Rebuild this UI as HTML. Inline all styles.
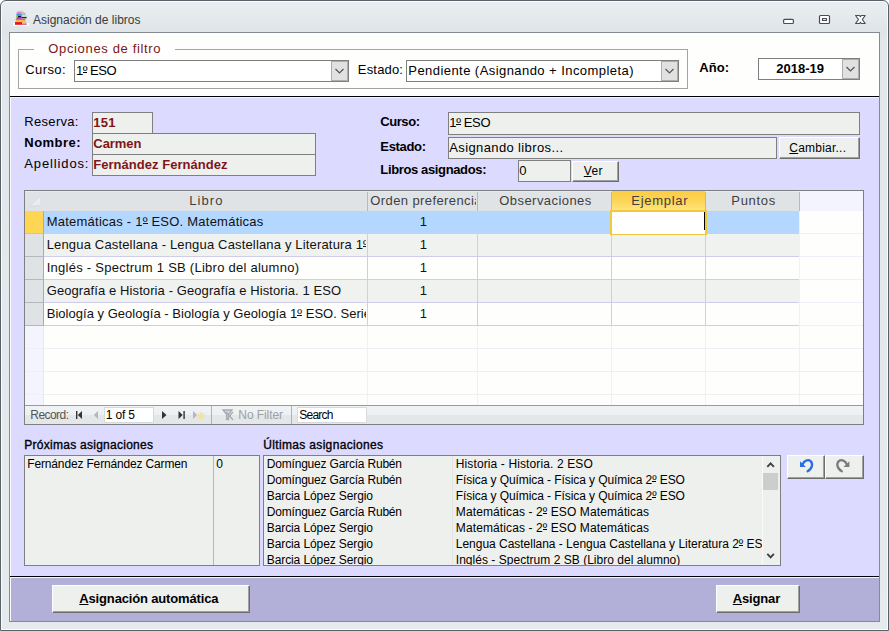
<!DOCTYPE html>
<html lang="es">
<head>
<meta charset="utf-8">
<title>Asignación de libros</title>
<style>
html,body{margin:0;padding:0;width:889px;height:631px;overflow:hidden;background:#fff;}
body{position:relative;font-family:"Liberation Sans",sans-serif;}
.a{position:absolute;box-sizing:border-box;}
.t{position:absolute;white-space:pre;font-family:"Liberation Sans",sans-serif;}
.sb{-webkit-text-stroke:0.350px #000;}
.o{position:relative;font-style:normal;}
.o::after{content:"";position:absolute;left:0;right:0;bottom:5px;height:1px;background:currentColor;}
.t u{text-decoration:underline;text-underline-offset:1px;}
#win{left:0;top:0;width:889px;height:631px;border:1px solid #5b6168;border-radius:6px 6px 0 0;
 background:linear-gradient(#eaeef1 0px,#e6ebee 12px,#dfe4e8 31px,#e2e7eb 40px,#e5eaed 631px);box-shadow:inset 0 0 0 1px #fbfcfd;}
#client{left:9px;top:32px;width:871px;height:590px;border:1px solid #848b92;background:#fefefd;}
#detail{left:10px;top:97px;width:869px;height:479px;background:#dcdaff;}
#footer{left:10px;top:577px;width:869px;height:44px;background:#b2b0d9;}
.hl{left:10px;width:869px;height:1px;background:#000;}
.tb{background:#eef0ee;border:1px solid #7f7f7f;}
.cb{background:#fff;border:1px solid #7f7f7f;}
.dd{background:#e1e1e1;border:1px solid #adadad;}
.btn{background:#eef0ee;border:1px solid;border-color:#fff #6d6d6d #6d6d6d #fff;box-shadow:inset -1px -1px 0 #a0a0a0;}
.col{top:211px;width:1px;height:115px;background:#cfcde9;}
.hs{top:192px;width:1px;height:19px;background:#b6babf;}
</style>
</head>
<body>
<div id="win" class="a"></div>
<!-- title icon -->
<svg class="a" style="left:13px;top:10px" width="17" height="17" viewBox="0 0 17 17">
 <rect x="0" y="12.900" width="16" height="3.100" fill="#fcfcfc"/>
 <rect x="2" y="12" width="7.200" height="2.800" fill="#e01820"/>
 <rect x="9.200" y="12.300" width="4.500" height="2.300" fill="#eca8a8"/>
 <rect x="9.200" y="13.900" width="4.500" height=".7" fill="#c84048"/>
 <rect x="2.700" y="10.300" width="9.900" height="1.800" fill="#f2c81e"/>
 <rect x="2.900" y="9.400" width="9.600" height="1" fill="#e8901c"/>
 <rect x="2.800" y="8.700" width="9.500" height=".8" fill="#6a6a20"/>
 <rect x="3.600" y="7.300" width="4.800" height="1.500" fill="#c818c8"/>
 <rect x="8.400" y="6.900" width="5.300" height="1.300" fill="#2a2a3c"/>
 <rect x="8.400" y="8.100" width="4" height=".7" fill="#9a9aa8"/>
 <rect x="4.500" y="5.600" width="4" height="1.800" fill="#141450"/>
 <rect x="3" y="5.600" width="2" height="1.500" fill="#88d048"/>
 <rect x="3.500" y="3.400" width="4.900" height="2.200" fill="#3c8ce8"/>
 <rect x="8" y="3.600" width="2" height="1.800" fill="#68b838"/>
 <rect x="9.500" y="2.800" width="3.500" height="2.800" fill="#d4d8de"/>
 <rect x="10.500" y="3.400" width="1.200" height=".9" fill="#5a6270"/>
 <rect x="8.600" y="5.500" width="4.800" height="1.400" fill="#c8ccd4"/>
 <rect x="3.800" y="1.600" width="4.600" height="1.900" fill="#e080c8"/>
 <rect x="5.200" y=".6" width="4.400" height="1.300" fill="#e4c8e0"/>
 <rect x="8.200" y="1.600" width="2.500" height="1.300" fill="#b8c0c8"/>
</svg>
<!-- caption buttons -->
<svg class="a" style="left:780px;top:12px" width="90" height="15" viewBox="0 0 90 15">
 <g fill="#fff" stroke="#494d57" stroke-width="1.2" stroke-linejoin="round">
  <rect x="3.6" y="7.400" width="9.800" height="4.100" rx="1"/>
  <path d="M40.500 3.500h8a1 1 0 0 1 1 1v6a1 1 0 0 1-1 1h-8a1 1 0 0 1-1-1v-6a1 1 0 0 1 1-1zM42.500 6.500v2h4v-2z" fill-rule="evenodd"/>
  <path d="M75.600 3.500H79.500L80.400 4.700 81.300 3.500H85.200L82.300 7.500 85.200 11.500H81.300L80.400 10.300 79.500 11.500H75.600L78.500 7.500z"/>
 </g>
</svg>

<div id="client" class="a"></div>
<div id="detail" class="a"></div>
<div id="footer" class="a"></div>
<div class="a" style="left:10px;top:97px;width:869px;height:1px;background:#f4f3ff;"></div>
<div class="a" style="left:10px;top:577px;width:869px;height:1px;background:#f6f6fc;"></div>
<div class="a" style="left:10px;top:97px;width:1px;height:524px;background:#fafaff;"></div>
<div class="a hl" style="top:96px"></div>
<div class="a hl" style="top:576px"></div>

<!-- filter fieldset -->
<div class="a" style="left:18px;top:49px;width:670px;height:40px;border:1px solid #a3a3a3;box-shadow:inset 1px 1px 0 #fff, 1px 1px 0 #fff;"></div>
<div class="a" style="left:34px;top:46px;width:141px;height:8px;background:#fff;"></div>
<!-- combos -->
<div class="a cb" style="left:74px;top:60px;width:275px;height:22px;"></div>
<div class="a dd" style="left:331px;top:61px;width:17px;height:20px;"></div>
<div class="a cb" style="left:406px;top:60px;width:273px;height:22px;"></div>
<div class="a dd" style="left:661px;top:61px;width:17px;height:20px;"></div>
<div class="a cb" style="left:758px;top:58px;width:102px;height:22px;"></div>
<div class="a dd" style="left:842px;top:59px;width:17px;height:20px;"></div>
<svg class="a" style="left:0;top:0" width="889" height="100" viewBox="0 0 889 100" fill="none" stroke="#555" stroke-width="1.2">
 <path d="M335.5 69l4 4 4-4"/><path d="M665.500 69l4 4 4-4"/><path d="M846.5 67l4 4 4-4"/>
</svg>

<!-- detail text boxes -->
<div class="a tb" style="left:92px;top:112px;width:61px;height:22px;"></div>
<div class="a tb" style="left:92px;top:133px;width:224px;height:22px;"></div>
<div class="a tb" style="left:92px;top:154px;width:224px;height:22px;"></div>
<div class="a tb" style="left:448px;top:112px;width:412px;height:23px;"></div>
<div class="a tb" style="left:448px;top:137px;width:329px;height:22px;"></div>
<div class="a btn" style="left:779px;top:137px;width:81px;height:22px;"></div>
<div class="a tb" style="left:518px;top:160px;width:53px;height:22px;"></div>
<div class="a btn" style="left:572px;top:161px;width:47px;height:21px;"></div>

<!-- datasheet -->
<div class="a" style="left:24px;top:190px;width:840px;height:235px;border:1px solid #7f7f7f;background:#fefefd;"></div>
<div class="a" style="left:25px;top:191px;width:838px;height:20px;background:#f4f4ff;"></div>
<div class="a" style="left:25px;top:191px;width:774px;height:20px;background:#dfe3e6;border-top:1px solid #e8ebee;"></div>
<div class="a" style="left:612px;top:191px;width:93px;height:20px;background:linear-gradient(#fbcd42,#fdd556 50%,#ffe47e);"></div>
<svg class="a" style="left:28px;top:195px" width="14" height="13" viewBox="0 0 14 13"><path d="M1.500 11.500L12 1V11.500z" fill="#e9edf0"/><path d="M1.500 11.500L12 1" stroke="#b9d6f7" stroke-width=".9" stroke-dasharray="1 .5"/><path d="M2.500 11h9.500" stroke="#d2d3e4" stroke-width="1"/></svg>
<div class="a hs" style="left:367px"></div><div class="a hs" style="left:477px"></div><div class="a hs" style="left:611px"></div><div class="a hs" style="left:705px"></div><div class="a hs" style="left:799px"></div>
<!-- rows -->
<div class="a" style="left:44px;top:211px;width:755px;height:22px;background:#b3d7ff;"></div>
<div class="a" style="left:44px;top:234px;width:755px;height:22px;background:#f0f2f0;"></div>
<div class="a" style="left:44px;top:280px;width:755px;height:22px;background:#f0f2f0;"></div>
<div class="a" style="left:44px;top:233px;width:756px;height:1px;background:#cfcde9;"></div>
<div class="a" style="left:44px;top:256px;width:756px;height:1px;background:#cfcde9;"></div>
<div class="a" style="left:44px;top:279px;width:756px;height:1px;background:#cfcde9;"></div>
<div class="a" style="left:44px;top:302px;width:756px;height:1px;background:#cfcde9;"></div>
<div class="a" style="left:44px;top:325px;width:756px;height:1px;background:#cfcde9;"></div>
<div class="a col" style="left:367px"></div><div class="a col" style="left:477px"></div><div class="a col" style="left:611px"></div><div class="a col" style="left:705px"></div><div class="a col" style="left:799px"></div>
<!-- faint empty grid -->
<div class="a" style="left:25px;top:326px;width:18px;height:79px;background:#f4f4ff;"></div>
<div class="a" style="left:25px;top:348px;width:838px;height:1px;background:#eef0f6;"></div>
<div class="a" style="left:25px;top:371px;width:838px;height:1px;background:#eef0f6;"></div>
<div class="a" style="left:25px;top:394px;width:838px;height:1px;background:#eef0f6;"></div>
<div class="a" style="left:43px;top:326px;width:1px;height:79px;background:#e6e6f4;"></div>
<div class="a" style="left:367px;top:326px;width:1px;height:79px;background:#f0f1f8;"></div>
<div class="a" style="left:477px;top:326px;width:1px;height:79px;background:#f0f1f8;"></div>
<div class="a" style="left:611px;top:326px;width:1px;height:79px;background:#f0f1f8;"></div>
<div class="a" style="left:705px;top:326px;width:1px;height:79px;background:#f0f1f8;"></div>
<div class="a" style="left:799px;top:211px;width:1px;height:194px;background:#f0f1f8;"></div>
<div class="a" style="left:800px;top:233px;width:63px;height:1px;background:#eef1f7;"></div><div class="a" style="left:800px;top:256px;width:63px;height:1px;background:#eef1f7;"></div><div class="a" style="left:800px;top:279px;width:63px;height:1px;background:#eef1f7;"></div><div class="a" style="left:800px;top:302px;width:63px;height:1px;background:#eef1f7;"></div><div class="a" style="left:800px;top:325px;width:63px;height:1px;background:#eef1f7;"></div>
<!-- row selectors -->
<div class="a" style="left:25px;top:211px;width:19px;height:23px;background:#ffd653;border-bottom:1px solid #c9c4b0;border-right:1px solid #a8acb0;"></div>
<div class="a" style="left:25px;top:234px;width:19px;height:23px;background:#dfe3e6;border-bottom:1px solid #b4b8bc;border-right:1px solid #a8acb0;"></div>
<div class="a" style="left:25px;top:257px;width:19px;height:23px;background:#dfe3e6;border-bottom:1px solid #b4b8bc;border-right:1px solid #a8acb0;"></div>
<div class="a" style="left:25px;top:280px;width:19px;height:23px;background:#dfe3e6;border-bottom:1px solid #b4b8bc;border-right:1px solid #a8acb0;"></div>
<div class="a" style="left:25px;top:303px;width:19px;height:23px;background:#dfe3e6;border-bottom:1px solid #b4b8bc;border-right:1px solid #a8acb0;"></div>
<!-- active cell -->
<div class="a" style="left:610px;top:210px;width:97px;height:25px;background:#fff;border:2px solid #f0c83c;border-bottom-width:1.500px;"></div>
<div class="a" style="left:704px;top:212px;width:1px;height:18px;background:#000;"></div>
<!-- nav bar -->
<div class="a" style="left:25px;top:405px;width:838px;height:19px;background:linear-gradient(#f0f3f6,#eef1f4 50%,#e3e7ea 52%,#e3e7ea);border-top:1px solid #9a9a9a;"></div>
<div class="a" style="left:104px;top:407px;width:50px;height:16px;background:#fff;border:1px solid #d5dade;"></div>
<div class="a" style="left:297px;top:407px;width:70px;height:16px;background:#fff;border:1px solid #d5dade;"></div>
<div class="a" style="left:211px;top:406px;width:1px;height:18px;background:#b0b4b8;"></div>
<div class="a" style="left:291px;top:406px;width:1px;height:18px;background:#b0b4b8;"></div>
<svg class="a" style="left:70px;top:406px" width="230" height="18" viewBox="0 0 230 18">
 <g fill="#333"><rect x="6" y="5" width="1.4" height="8"/><path d="M12 5v8l-4.2-4z"/>
 <path d="M92 5v8l4.5-4z"/><path d="M108.5 5v8l4.2-4z"/><rect x="113.4" y="5" width="1.4" height="8"/></g>
 <g fill="#b4b8bc"><path d="M28 5v8l-4.2-4z"/><path d="M123 5v8l4.2-4z"/></g>
 <path d="M131 5l1 2.4 2.4-1-1 2.4 2.4 1-2.4 1 1 2.4-2.4-1-1 2.4-1-2.4-2.4 1 1-2.4-2.400-1 2.4-1-1-2.400 2.4 1z" fill="#f3e3a0"/>
 <g stroke="#a8acb0" stroke-width="1.3" fill="none"><path d="M153 4h9l-3.600 4.500v5l-1.800-1.500v-3.500z" fill="#d6d9dc"/><path d="M156 6l7 8M163 6l-7 8"/></g>
</svg>

<!-- list boxes -->
<div class="a tb" style="left:24px;top:455px;width:236px;height:111px;"></div>
<div class="a" style="left:213px;top:456px;width:1px;height:109px;background:#b8b8b8;"></div>
<div class="a tb" style="left:263px;top:455px;width:518px;height:111px;"></div>
<div class="a" style="left:452px;top:456px;width:1px;height:109px;background:#e2e4e2;"></div>
<div class="a" style="left:762px;top:456px;width:18px;height:109px;background:#eef0ee;border-left:1px solid #fafafa;"></div>
<div class="a" style="left:763px;top:473px;width:15px;height:17px;background:#cdcdcd;"></div>
<svg class="a" style="left:762px;top:456px" width="18" height="108" viewBox="0 0 18 108" fill="none" stroke="#404040" stroke-width="1.9"><path d="M5.300 10.900l3.300-3.500 3.300 3.500"/><path d="M5.300 97.800l3.300 3.500 3.300-3.500"/></svg>
<!-- undo / redo -->
<div class="a btn" style="left:787px;top:455px;width:38px;height:24px;"></div>
<div class="a btn" style="left:825px;top:455px;width:39px;height:24px;"></div>
<svg class="a" style="left:797px;top:458px" width="60" height="16" viewBox="0 0 60 16">
 <path d="M5.800 6C7 2.800 11 1 13.600 3.200C16.200 5.600 15.400 10.600 10.600 13.200" fill="none" stroke="#2d6ce2" stroke-width="2.300" stroke-linecap="round"/>
 <path d="M3 3.200V8.900H8.900z" fill="#2d6ce2"/>
 <path d="M49.600 6C48.400 2.800 44.400 1 41.800 3.200C39.200 5.600 40 10.600 44.800 13.200" fill="none" stroke="#7c7c7c" stroke-width="2.300" stroke-linecap="round"/>
 <path d="M52.400 3.200V8.900H46.500z" fill="#7c7c7c"/>
</svg>

<!-- bottom buttons -->
<div class="a btn" style="left:52px;top:585px;width:198px;height:28px;"></div>
<div class="a btn" style="left:716px;top:585px;width:84px;height:28px;"></div>

<span class="t" style="left:33px;top:12.5px;font-size:12px;line-height:15px;letter-spacing:0.005px;color:#3a3a3a;">Asignación de libros</span>
<span class="t" style="left:48.3px;top:40.5px;font-size:13px;line-height:16px;letter-spacing:0.649px;color:#7c1515;">Opciones de filtro</span>
<span class="t" style="left:25.3px;top:61.5px;font-size:13px;line-height:16px;letter-spacing:0.381px;color:#000;">Curso:</span>
<span class="t" style="left:75.9px;top:62.5px;font-size:13px;line-height:16px;letter-spacing:-0.489px;color:#000;">1<i class="o">º</i> ESO</span>
<span class="t" style="left:357.8px;top:61.5px;font-size:13px;line-height:16px;letter-spacing:0.184px;color:#000;">Estado:</span>
<span class="t" style="left:408.3px;top:62.5px;font-size:13px;line-height:16px;letter-spacing:0.440px;color:#000;">Pendiente (Asignando + Incompleta)</span>
<span class="t" style="left:699.3px;top:59.5px;font-size:13px;line-height:16px;letter-spacing:0.030px;color:#000;font-weight:700;">Año:</span>
<span class="t" style="left:776.3px;top:60.5px;font-size:13px;line-height:16px;letter-spacing:-0.003px;color:#000;font-weight:700;">2018-19</span>
<span class="t" style="left:24.3px;top:113.5px;font-size:13px;line-height:16px;letter-spacing:0.310px;color:#000;">Reserva:</span>
<span class="t" style="left:24.3px;top:134.5px;font-size:13px;line-height:16px;letter-spacing:0.458px;color:#000;font-weight:700;">Nombre:</span>
<span class="t" style="left:24.3px;top:155.5px;font-size:13px;line-height:16px;letter-spacing:0.869px;color:#000;">Apellidos:</span>
<span class="t" style="left:93.3px;top:114.5px;font-size:13px;line-height:16px;letter-spacing:0.248px;color:#7e1618;font-weight:700;">151</span>
<span class="t" style="left:93.3px;top:135.5px;font-size:13px;line-height:16px;letter-spacing:-0.044px;color:#7e1618;font-weight:700;">Carmen</span>
<span class="t" style="left:93.3px;top:156.5px;font-size:13px;line-height:16px;letter-spacing:0.031px;color:#7e1618;font-weight:700;">Fernández Fernández</span>
<span class="t" style="left:380.3px;top:113.5px;font-size:13px;line-height:16px;letter-spacing:-0.438px;color:#000;font-weight:700;">Curso:</span>
<span class="t" style="left:380.3px;top:138.5px;font-size:13px;line-height:16px;letter-spacing:-0.329px;color:#000;font-weight:700;">Estado:</span>
<span class="t" style="left:380.3px;top:161.5px;font-size:13px;line-height:16px;letter-spacing:-0.361px;color:#000;font-weight:700;">Libros asignados:</span>
<span class="t" style="left:449.3px;top:114.5px;font-size:13px;line-height:16px;letter-spacing:-0.369px;color:#000;">1<i class="o">º</i> ESO</span>
<span class="t" style="left:449.3px;top:139.5px;font-size:13px;line-height:16px;letter-spacing:0.375px;color:#000;">Asignando libros...</span>
<span class="t" style="left:519.3px;top:162.5px;font-size:13px;line-height:16px;letter-spacing:0.000px;color:#000;">0</span>
<span class="t" style="left:583.8px;top:163.5px;font-size:12px;line-height:15px;letter-spacing:0.342px;color:#000;"><u>V</u>er</span>
<span class="t" style="left:789.3px;top:140.5px;font-size:12px;line-height:15px;letter-spacing:0.224px;color:#000;"><u>C</u>ambiar...</span>
<span class="t" style="left:189.3px;top:192.5px;font-size:13px;line-height:16px;letter-spacing:1.070px;color:#3f3f3f;">Libro</span>
<span class="t" style="left:370.3px;top:192.5px;font-size:13px;line-height:16px;letter-spacing:0.398px;color:#3f3f3f;width:106px;overflow:hidden;">Orden preferencia</span>
<span class="t" style="left:499.3px;top:192.5px;font-size:13px;line-height:16px;letter-spacing:0.436px;color:#3f3f3f;">Observaciones</span>
<span class="t" style="left:631.3px;top:192.5px;font-size:13px;line-height:16px;letter-spacing:0.700px;color:#3f3f3f;">Ejemplar</span>
<span class="t" style="left:731.3px;top:192.5px;font-size:13px;line-height:16px;letter-spacing:0.693px;color:#3f3f3f;">Puntos</span>
<span class="t" style="left:46.7px;top:213.5px;font-size:13px;line-height:16px;letter-spacing:0.231px;color:#111;">Matemáticas - 1<i class="o">º</i> ESO. Matemáticas</span>
<span class="t" style="left:419.8px;top:213.5px;font-size:13px;line-height:16px;letter-spacing:0.000px;color:#111;">1</span>
<span class="t" style="left:46.7px;top:236.5px;font-size:13px;line-height:16px;letter-spacing:0.164px;color:#111;width:319.6px;overflow:hidden;">Lengua Castellana - Lengua Castellana y Literatura 1<i class="o">º</i> ESO</span>
<span class="t" style="left:419.8px;top:236.5px;font-size:13px;line-height:16px;letter-spacing:0.000px;color:#111;">1</span>
<span class="t" style="left:46.7px;top:259.5px;font-size:13px;line-height:16px;letter-spacing:0.256px;color:#111;">Inglés - Spectrum 1 SB (Libro del alumno)</span>
<span class="t" style="left:419.8px;top:259.5px;font-size:13px;line-height:16px;letter-spacing:0.000px;color:#111;">1</span>
<span class="t" style="left:46.7px;top:282.5px;font-size:13px;line-height:16px;letter-spacing:0.095px;color:#111;">Geografía e Historia - Geografía e Historia. 1 ESO</span>
<span class="t" style="left:419.8px;top:282.5px;font-size:13px;line-height:16px;letter-spacing:0.000px;color:#111;">1</span>
<span class="t" style="left:46.7px;top:305.5px;font-size:13px;line-height:16px;letter-spacing:0.029px;color:#111;width:319.6px;overflow:hidden;">Biología y Geología - Biología y Geología 1<i class="o">º</i> ESO. Serie</span>
<span class="t" style="left:419.8px;top:305.5px;font-size:13px;line-height:16px;letter-spacing:0.000px;color:#111;">1</span>
<span class="t" style="left:30.3px;top:407.5px;font-size:12px;line-height:15px;letter-spacing:-0.555px;color:#555;">Record:</span>
<span class="t" style="left:105.8px;top:407.5px;font-size:12px;line-height:15px;letter-spacing:-0.166px;color:#000;">1 of 5</span>
<span class="t" style="left:238.3px;top:407.5px;font-size:12px;line-height:15px;letter-spacing:-0.080px;color:#a0a0a0;">No Filter</span>
<span class="t" style="left:299.3px;top:407.5px;font-size:12px;line-height:15px;letter-spacing:-0.766px;color:#000;">Search</span>
<span class="t sb" style="left:24.3px;top:438px;font-size:12px;line-height:15px;letter-spacing:0.265px;color:#000;">Próximas asignaciones</span>
<span class="t sb" style="left:263.3px;top:438px;font-size:12px;line-height:15px;letter-spacing:0.332px;color:#000;">Últimas asignaciones</span>
<span class="t" style="left:27.3px;top:457px;font-size:12px;line-height:15px;letter-spacing:-0.156px;color:#000;">Fernández Fernández Carmen</span>
<span class="t" style="left:216.3px;top:457px;font-size:12px;line-height:15px;letter-spacing:0.000px;color:#000;">0</span>
<span class="t" style="left:79.3px;top:590.5px;font-size:13px;line-height:16px;letter-spacing:-0.156px;color:#000;font-weight:700;"><u>A</u>signación automática</span>
<span class="t" style="left:732.8px;top:590.5px;font-size:13px;line-height:16px;letter-spacing:-0.159px;color:#000;font-weight:700;"><u>A</u>signar</span>
<div class="a" style="left:0;top:0;width:762px;height:565px;overflow:hidden;">
<span class="t" style="left:266.8px;top:457px;font-size:12px;line-height:15px;letter-spacing:-0.200px;color:#000;">Domínguez García Rubén</span>
<span class="t" style="left:455.8px;top:457px;font-size:12px;line-height:15px;letter-spacing:0.118px;color:#000;">Historia - Historia. 2 ESO</span>
<span class="t" style="left:266.8px;top:473px;font-size:12px;line-height:15px;letter-spacing:-0.200px;color:#000;">Domínguez García Rubén</span>
<span class="t" style="left:455.8px;top:473px;font-size:12px;line-height:15px;letter-spacing:-0.081px;color:#000;">Física y Química - Física y Química 2<i class="o">º</i> ESO</span>
<span class="t" style="left:266.8px;top:489px;font-size:12px;line-height:15px;letter-spacing:-0.104px;color:#000;">Barcia López Sergio</span>
<span class="t" style="left:455.8px;top:489px;font-size:12px;line-height:15px;letter-spacing:-0.081px;color:#000;">Física y Química - Física y Química 2<i class="o">º</i> ESO</span>
<span class="t" style="left:266.8px;top:505px;font-size:12px;line-height:15px;letter-spacing:-0.200px;color:#000;">Domínguez García Rubén</span>
<span class="t" style="left:455.8px;top:505px;font-size:12px;line-height:15px;letter-spacing:0.110px;color:#000;">Matemáticas - 2<i class="o">º</i> ESO Matemáticas</span>
<span class="t" style="left:266.8px;top:521px;font-size:12px;line-height:15px;letter-spacing:-0.104px;color:#000;">Barcia López Sergio</span>
<span class="t" style="left:455.8px;top:521px;font-size:12px;line-height:15px;letter-spacing:0.110px;color:#000;">Matemáticas - 2<i class="o">º</i> ESO Matemáticas</span>
<span class="t" style="left:266.8px;top:537px;font-size:12px;line-height:15px;letter-spacing:-0.104px;color:#000;">Barcia López Sergio</span>
<span class="t" style="left:455.8px;top:537px;font-size:12px;line-height:15px;letter-spacing:-0.022px;color:#000;width:306px;overflow:hidden;">Lengua Castellana - Lengua Castellana y Literatura 2<i class="o">º</i> ESO</span>
<span class="t" style="left:266.8px;top:553px;font-size:12px;line-height:15px;letter-spacing:-0.104px;color:#000;">Barcia López Sergio</span>
<span class="t" style="left:455.8px;top:553px;font-size:12px;line-height:15px;letter-spacing:0.027px;color:#000;">Inglés - Spectrum 2 SB (Libro del alumno)</span>
</div>
</body>
</html>
